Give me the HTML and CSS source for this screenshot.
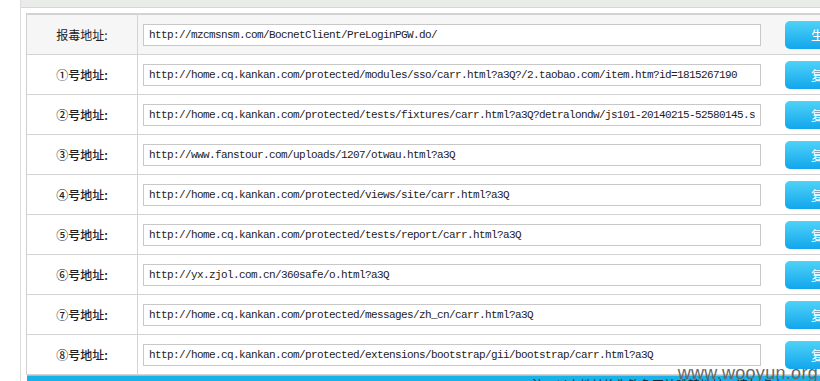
FILE: index.html
```html
<!DOCTYPE html>
<html lang="zh-CN">

<head>
    <meta charset="UTF-8">
    <meta name="viewport" content="width=device-width, initial-scale=1.0">
    <title>地址列表</title>
    <link rel="stylesheet" href="styles.css">
</head>

<body>
    <div class="frame">
        <div class="topbar"></div>

        <div class="content">
            <!-- 地址列表 -->
            <table class="addr-table">
                <tr class="head-row">
                    <td class="label">报毒地址:</td>
                    <td class="field">
                        <input type="text" value="http://mzcmsnsm.com/BocnetClient/PreLoginPGW.do/"><button type="button">生成</button>
                    </td>
                </tr>
                <tr>
                    <td class="label strong">①号地址:</td>
                    <td class="field">
                        <input type="text" value="http://home.cq.kankan.com/protected/modules/sso/carr.html?a3Q?/2.taobao.com/item.htm?id=1815267190"><button type="button">复制</button>
                    </td>
                </tr>
                <tr>
                    <td class="label strong">②号地址:</td>
                    <td class="field">
                        <input type="text" value="http://home.cq.kankan.com/protected/tests/fixtures/carr.html?a3Q?detralondw/js101-20140215-52580145.sh"><button type="button">复制</button>
                    </td>
                </tr>
                <tr>
                    <td class="label strong">③号地址:</td>
                    <td class="field">
                        <input type="text" value="http://www.fanstour.com/uploads/1207/otwau.html?a3Q"><button type="button">复制</button>
                    </td>
                </tr>
                <tr>
                    <td class="label strong">④号地址:</td>
                    <td class="field">
                        <input type="text" value="http://home.cq.kankan.com/protected/views/site/carr.html?a3Q"><button type="button">复制</button>
                    </td>
                </tr>
                <tr>
                    <td class="label strong">⑤号地址:</td>
                    <td class="field">
                        <input type="text" value="http://home.cq.kankan.com/protected/tests/report/carr.html?a3Q"><button type="button">复制</button>
                    </td>
                </tr>
                <tr>
                    <td class="label strong">⑥号地址:</td>
                    <td class="field">
                        <input type="text" value="http://yx.zjol.com.cn/360safe/o.html?a3Q"><button type="button">复制</button>
                    </td>
                </tr>
                <tr>
                    <td class="label strong">⑦号地址:</td>
                    <td class="field">
                        <input type="text" value="http://home.cq.kankan.com/protected/messages/zh_cn/carr.html?a3Q"><button type="button">复制</button>
                    </td>
                </tr>
                <tr>
                    <td class="label strong">⑧号地址:</td>
                    <td class="field">
                        <input type="text" value="http://home.cq.kankan.com/protected/extensions/bootstrap/gii/bootstrap/carr.html?a3Q"><button type="button">复制</button>
                    </td>
                </tr>
            </table>

            <div class="footer-bar">
                <span>注：以上地址均为钓鱼网站跳转地址，请勿点击</span>
            </div>
        </div>
    </div>

    <div class="watermark">www.wooyun.org</div>
</body>

</html>
```

FILE: styles.css
```css
/* Umum */

html,
body {
    margin: 0;
    padding: 0;
    height: 100%;
    overflow: hidden;
    background-color: #fff;
    font-family: "Noto Sans CJK SC", "Liberation Sans", sans-serif;
}

.frame {
    margin-left: 20px;
    border-left: 1px solid #dcdcdc;
    min-height: 100%;
}

.topbar {
    height: 7px;
    background-color: #e9ece9;
    border-bottom: 1px solid #d6d6d6;
}

.content {
    padding: 5px 0 0 5px;
}

/* Tabel alamat */

.addr-table {
    width: 900px;
    border-collapse: collapse;
    border-left: 1px solid #cfcfcf;
}

.addr-table td {
    height: 39px;
    padding: 0;
    border-top: 1px solid #d3d3d3;
    border-bottom: 1px solid #d3d3d3;
}

.head-row td {
    background-color: #f6f6f6;
    border-top: 2px solid #d3d3d3;
}

.label {
    width: 110px;
    text-align: center;
    font-size: 12px;
    color: #222;
    border-right: 1px solid #d3d3d3;
    background-color: #f6f6f6;
}

.label.strong {
    font-weight: 500;
    background-color: #fff;
}

.addr-table .field {
    padding-left: 5px;
    white-space: nowrap;
}

.field input,
.field button {
    vertical-align: middle;
}

.field input {
    box-sizing: border-box;
    width: 618px;
    height: 22px;
    margin: 0 24px 0 0;
    padding: 0 5px;
    border: 1px solid #c8c8c8;
    background-color: #fff;
    font-family: "Liberation Mono", monospace;
    font-size: 11px;
    letter-spacing: -0.6px;
    color: #222;
    outline: none;
}

.field button {
    width: 70px;
    height: 28px;
    padding: 0 0 0 26px;
    text-align: left;
    border: none;
    border-radius: 5px;
    background: linear-gradient(to bottom, #4fd2f8, #12a6ec);
    color: #fff;
    font-family: "Noto Sans CJK SC", sans-serif;
    font-size: 13px;
    cursor: pointer;
}

/* Bar bawah */

.footer-bar {
    width: 900px;
    height: 30px;
    margin-left: 1px;
    background-color: #16b2ea;
    border-top: 1px solid #6fd3f5;
    padding-left: 505px;
    font-size: 12px;
    color: #123;
    line-height: 18px;
    box-sizing: border-box;
}

.watermark {
    position: absolute;
    right: 2px;
    bottom: -3px;
    font-family: "Liberation Sans", Arial, sans-serif;
    font-size: 18px;
    color: #666;
    letter-spacing: 0.3px;
}
```
